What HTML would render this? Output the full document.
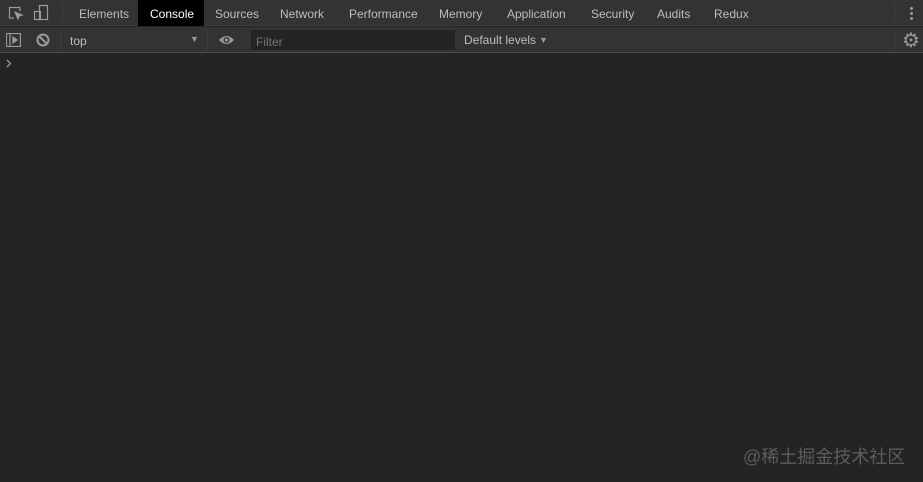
<!DOCTYPE html>
<html><head><style>
*{margin:0;padding:0;box-sizing:border-box}
body{width:923px;height:482px;background:#242424;font-family:"Liberation Sans",sans-serif;position:relative;overflow:hidden;color:#bdbdbd}
.bar1{position:absolute;left:0;top:0;width:923px;height:26px;background:#333;border-bottom:1px solid #3d3d3d}
.bar2{position:absolute;left:0;top:27px;width:923px;height:26px;background:#333;border-bottom:1px solid #4a4a4a}
.t{position:absolute;top:7px;font-size:12px;color:#bdbdbd}
.sel{position:absolute;left:138px;top:0;width:66px;height:26px;background:#000}
.sep{position:absolute;width:1px;background:#3f3f3f}
</style></head><body>
<div class="bar1">
<svg style="position:absolute;left:8px;top:5px" width="16" height="16" viewBox="0 0 16 16" fill="none" stroke="#9a9a9a" stroke-width="1.2"><path d="M6 13H1.5V2.5H12V6"/><path d="M7 7l7 3-3 1-1 3z" fill="#9a9a9a"/></svg>
<svg style="position:absolute;left:32px;top:4px" width="18" height="18" viewBox="0 0 18 18" fill="none" stroke="#9a9a9a" stroke-width="1.2"><rect x="7.5" y="1.5" width="8" height="14"/><rect x="2.5" y="7.5" width="6" height="8"/></svg>
<div class="sep" style="left:62px;top:3px;height:20px"></div>
<div class="sel"></div>
<span class="t" style="left:79px">Elements</span>
<span class="t" style="left:150px;color:#fff">Console</span>
<span class="t" style="left:215px">Sources</span>
<span class="t" style="left:280px">Network</span>
<span class="t" style="left:349px">Performance</span>
<span class="t" style="left:439px">Memory</span>
<span class="t" style="left:507px">Application</span>
<span class="t" style="left:591px">Security</span>
<span class="t" style="left:657px">Audits</span>
<span class="t" style="left:714px">Redux</span>
<div class="sep" style="left:894px;top:3px;height:20px"></div>
<div style="position:absolute;left:910px;top:7px;width:3px;height:3px;background:#999;border-radius:50%;box-shadow:0 5px 0 #999,0 10px 0 #999"></div>
</div>
<div class="bar2">
<svg style="position:absolute;left:6px;top:6px" width="15" height="14" viewBox="0 0 15 14" fill="none" stroke="#9a9a9a" stroke-width="1.2"><rect x="0.5" y="0.5" width="14" height="13"/><path d="M4 1v12"/><path d="M7 4l4 3-4 3z" fill="#9a9a9a"/></svg>
<svg style="position:absolute;left:36px;top:6px" width="14" height="14" viewBox="0 0 14 14" fill="none" stroke="#9a9a9a" stroke-width="2"><circle cx="7" cy="7" r="5.5"/><path d="M3 3l8 8"/></svg>
<div class="sep" style="left:60px;top:2px;height:22px"></div>
<span class="t" style="left:70px;top:7px">top</span>
<span style="position:absolute;left:190px;top:7px;font-size:9px;color:#999">▼</span>
<div class="sep" style="left:207px;top:2px;height:22px"></div>
<svg style="position:absolute;left:218px;top:7px" width="17" height="12" viewBox="0 0 17 12"><path d="M1 6Q8.5-2 16 6Q8.5 14 1 6z" fill="#9a9a9a"/><circle cx="8.5" cy="6" r="3" fill="#333"/><circle cx="8.5" cy="6" r="1.6" fill="#9a9a9a"/></svg>
<div style="position:absolute;left:251px;top:3px;width:204px;height:20px;background:#242424"></div>
<span class="t" style="left:256px;top:8px;color:#777">Filter</span>
<span class="t" style="left:464px;top:6px">Default levels</span>
<span style="position:absolute;left:539px;top:8px;font-size:9px;color:#999">▼</span>
<div class="sep" style="left:894px;top:2px;height:22px"></div>
<span style="position:absolute;left:902px;top:1px;font-size:20px;color:#999">⚙</span>
</div>
<svg style="position:absolute;left:6px;top:59px" width="6" height="9" viewBox="0 0 6 9" fill="none" stroke="#999" stroke-width="1.3"><path d="M1 1l3.5 3.5L1 8"/></svg>
<div style="position:absolute;left:743px;top:443px;font-size:18px;color:#5c5c5c;font-family:'Liberation Sans','Noto Sans CJK SC',sans-serif">@稀土掘金技术社区</div>
</body></html>
